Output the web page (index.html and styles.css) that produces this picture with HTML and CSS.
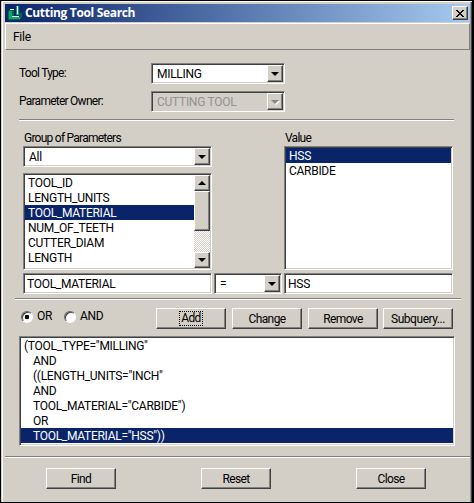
FILE: index.html
```
<!DOCTYPE html>
<html lang="en">
<head>
<meta charset="utf-8">
<title>Cutting Tool Search</title>
<link rel="stylesheet" href="styles.css">
</head>
<body>
<main class="window">
  <header class="titlebar">
    <svg class="logo" width="14" height="15" viewBox="0 0 14 15" shape-rendering="crispEdges">
      <path d="M1 4h5v6h5V7h3v4h-1v2h-1v1H0V5h1z" fill="#006b32"/>
      <path d="M1 5h3v6h8v2H1z" fill="#08a878"/>
      <path d="M2 3h4v1H2zM4 10h7v1H4z" fill="#f4f8f0"/>
      <path d="M8 0h3v9H8z" fill="#0a9a90"/><path d="M9 0h1v8H9z" fill="#fff"/>
    </svg>
    <h1>Cutting Tool Search</h1>
    <button class="x" aria-label="Close window"><svg width="8" height="7" viewBox="0 0 8 7" shape-rendering="crispEdges"><path d="M0 0h2v1h1v1h2V1h1V0h2v1H7v1H6v1H5v1h1v1h1v1h1v1H6V6H5V5H3v1H2v1H0V6h1V5h1V4h1V3H2V2H1V1H0z"/></svg></button>
  </header>
  <nav class="menu"><span>File</span></nav>

  <section class="type">
    <div class="field"><label>Tool Type:</label><div class="combo"><span>MILLING</span><i class="btn"><b class="down"></b></i></div></div>
    <div class="field"><label>Parameter Owner:</label><div class="combo off"><span>CUTTING TOOL</span><i class="btn"><b class="down"></b></i></div></div>
  </section>
  <hr class="rule-a">

  <section class="params">
    <div class="left">
      <label>Group of Parameters</label>
      <div class="combo"><span>All</span><i class="btn"><b class="down"></b></i></div>
      <div class="list scroll">
        <ul><li>TOOL_ID</li><li>LENGTH_UNITS</li><li class="sel">TOOL_MATERIAL</li><li>NUM_OF_TEETH</li><li>CUTTER_DIAM</li><li>LENGTH</li></ul>
        <div class="bar"><i class="btn"><b class="up"></b></i><i class="btn thumb"></i><i class="btn end"><b class="down"></b></i></div>
      </div>
    </div>
    <div class="right">
      <label>Value</label>
      <ul class="list values"><li class="sel">HSS</li><li>CARBIDE</li></ul>
    </div>
  </section>
  <section class="condition">
    <div class="input name">TOOL_MATERIAL</div>
    <div class="combo op"><span>=</span><i class="btn"><b class="down"></b></i></div>
    <div class="input val">HSS</div>
  </section>
  <hr class="rule-b">

  <section class="actions">
    <label class="radio or"><i class="dot on"></i>OR</label>
    <label class="radio and"><i class="dot"></i>AND</label>
    <button class="push"><span class="focus">Add</span></button>
    <button class="push">Change</button>
    <button class="push">Remove</button>
    <button class="push sub">Subquery...</button>
  </section>
  <ul class="list query">
    <li>(TOOL_TYPE="MILLING"</li><li class="in">AND</li><li class="in">((LENGTH_UNITS="INCH"</li><li class="in">AND</li><li class="in">TOOL_MATERIAL="CARBIDE")</li><li class="in">OR</li><li class="in sel">TOOL_MATERIAL="HSS"))</li>
  </ul>
  <hr class="rule-c">
  <footer><button class="push">Find</button><button class="push">Reset</button><button class="push">Close</button></footer>
</main>
</body>
</html>
```
FILE: styles.css
```
* { box-sizing: border-box; }
body { margin: 0; background: #000; font: 12px/15px Roboto, "Liberation Sans", sans-serif; letter-spacing: -.28px; color: #000; }
ul, h1 { margin: 0; padding: 0; list-style: none; }
button { font: inherit; color: inherit; letter-spacing: inherit; padding: 0; }
.window {
  width: 474px; height: 503px; overflow: hidden; white-space: nowrap;
  display: flex; flex-direction: column;
  padding: 2px 2px 0 3px;
  background: #d3cec6;
  border: solid #000; border-width: 1px 2px 1px 1px;
  box-shadow: inset 1px 0 #d3cec6, inset 2px 1px #fff, inset -1px 0 #404040, inset -2px 0 #999;
}
.titlebar {
  height: 18px; margin: 1px 0 0 1px; width: 465px; padding: 0 2px 0 3px;
  display: flex; align-items: center;
  background: linear-gradient(90deg, #0a246a, #a6caf0); color: #fff;
}
.titlebar h1 { flex: 1; margin-left: 3px; font: bold 12px/18px "Open Sans", sans-serif; letter-spacing: -.33px; }
.x, .btn, .push {
  background: #d3cec6; border: 1px solid; border-color: #fff #404040 #404040 #fff;
  box-shadow: inset -1px -1px #808080; display: flex; align-items: center; justify-content: center;
}
.x { width: 16px; height: 14px; }
.menu {
  margin: 1px 0 0 1px; width: 465px; height: 27px; padding: 6px 0 0 7px;
  border: 1px solid; border-color: #fff #808080 #808080 #fff;
}
.type { display: grid; gap: 7px; margin: 13px 0 0 15px; }
.field { display: flex; align-items: center; height: 21px; }
.field label { width: 132px; }
.field label, .params label { letter-spacing: -.75px; }
.combo, .list, .input {
  background: #fff; border: 1px solid; border-color: #808080 #fff #fff #808080; padding: 1px;
  box-shadow: inset 1px 1px #404040, inset -1px -1px #d3cec6;
}
.combo { display: flex; width: 134px; height: 21px; padding: 1px 1px 1px 5px; }
.combo span { flex: 1; line-height: 18px; }
.combo .btn { width: 16px; height: 17px; }
.off { background: #d3cec6; color: #929292; }
.down, .up { border: 4px solid transparent; border-bottom-width: 0; border-top-color: #000; width: 0; height: 0; }
.up { border-width: 0 4px 4px; border-bottom-color: #000; }
.off .down { border-top-color: #858585; filter: drop-shadow(1px 1px 0 #fff); }
hr { margin: 0; border: solid; border-width: 1px 0; border-color: #808080 #fff #fff; height: 2px; flex: none; }
.rule-a { margin: 7px 16px 0 15px; }
.params { display: flex; margin: 10px 0 0 19px; gap: 72px; }
.params label { display: block; height: 15px; line-height: 15px; margin: 0 0 0 1px; }
.left { width: 189px; }
.left .combo { width: 189px; }
li { height: 15px; padding-left: 3px; line-height: 16px; }
.sel { background: #0a246a; color: #fff; }
.scroll { display: flex; height: 97px; margin-top: 6px; }
.scroll ul { flex: 1; }
.scroll li { padding-left: 3px; }
.bar { width: 16px; display: flex; flex-direction: column; background: repeating-conic-gradient(#fff 0 25%, #d3cec6 0 50%) 0 0 / 2px 2px; }
.bar .btn { height: 16px; }
.bar .thumb { height: 40px; }
.bar .end { margin-top: auto; }
.right { width: 169px; }
.values { height: 124px; }
.condition { display: flex; gap: 2px; margin: 3px 0 0 19px; }
.input { height: 21px; padding-left: 3px; line-height: 18px; }
.name { width: 189px; }
.op { width: 68px; }
.val { width: 169px; }
.rule-b { margin: 4px 9px 0 11px; }
.actions { display: flex; align-items: center; margin: 8px 0 0 17px; height: 21px; }
.radio { display: flex; align-items: center; gap: 4px; margin-top: -4px; width: 43px; }
.and { width: 92px; }
.dot { width: 12px; height: 12px; border: 1px solid; border-color: #666 #fff #fff #666; border-radius: 50%; background: #fff; box-shadow: inset 1px 1px #404040; }
.on { background: radial-gradient(circle, #000 0 2px, #fff 2.6px); }
.push { width: 70px; height: 21px; flex: none; line-height: 20px; letter-spacing: -.6px; }
.actions .push + .push { margin-left: 6px; }
.actions .push.sub { margin-left: 5px; letter-spacing: -.45px; }
.focus { outline: 1px dotted #000; line-height: 13px; padding: 0 1px; }
.query { margin: 7px 0 0 15px; width: 436px; height: 110px; flex: none; }
.query .in { padding-left: 12px; }
.rule-c { margin: 10px 0 0 1px; width: 465px; }
footer { display: flex; gap: 85px; margin: 10px 0 0 42px; }
```
